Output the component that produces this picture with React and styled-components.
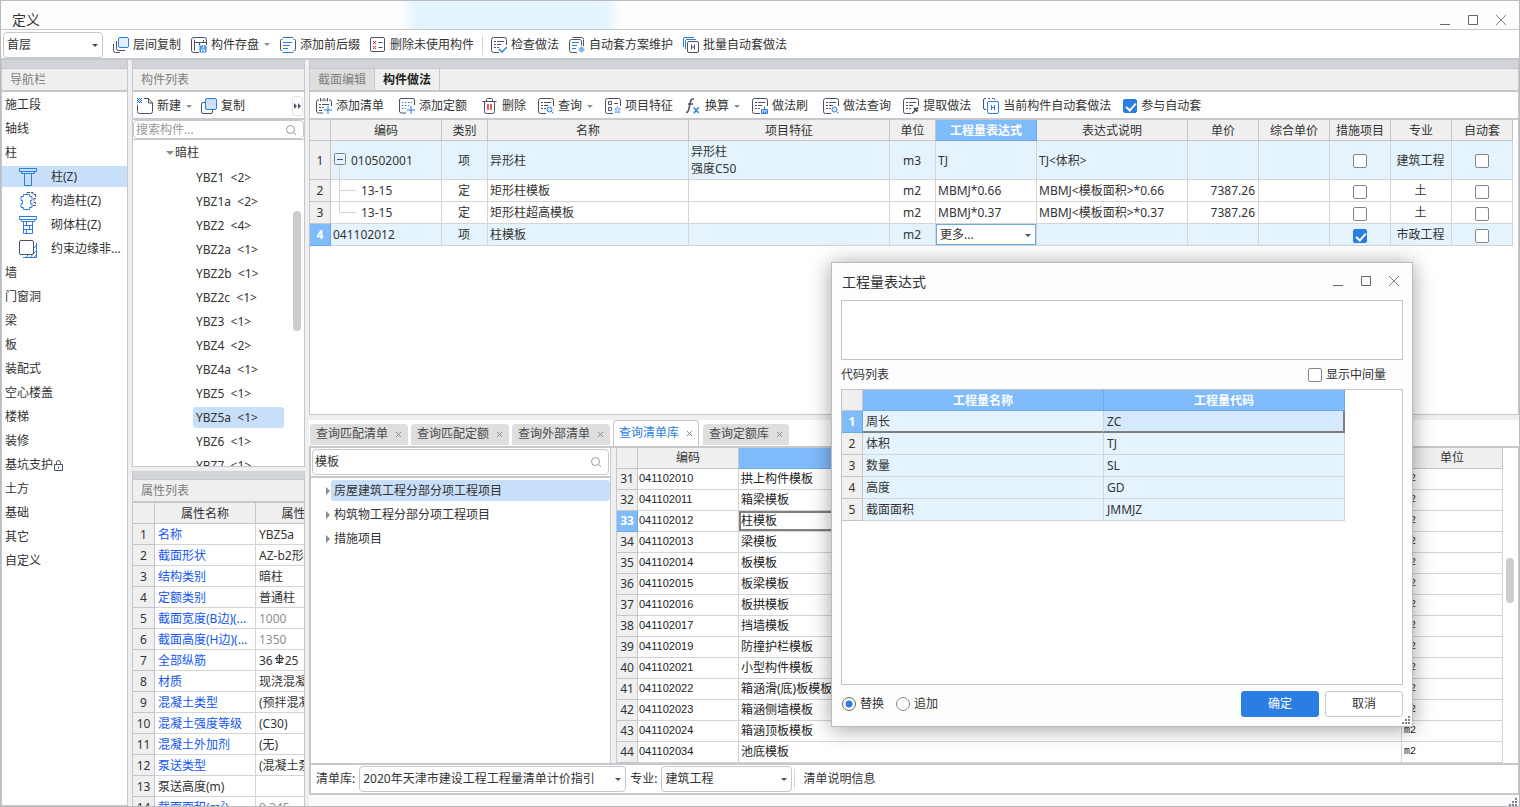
import React from "react";
import styled, { createGlobalStyle, css } from "styled-components";

const GlobalStyle = createGlobalStyle`
  * {
    box-sizing: border-box;
  }
  html,
  body,
  #root {
    height: 100%;
    margin: 0;
  }
  body {
    font: 12px/16px "Noto Sans", "Noto Sans CJK SC", sans-serif;
    color: #333;
    background: #fff;
    overflow: hidden;
  }
  button,
  input,
  select,
  textarea {
    font: inherit;
    color: inherit;
  }
`;

const line = "#c5c8cd";
const cellLine = "#d3d4d6";
const blue = "#2b7de1";
const ink = "#4b5166";

/* ---------- window frame ---------- */

const Window = styled.div`
  position: relative;
  display: flex;
  flex-direction: column;
  height: 100%;
  border: 1px solid #b9bbbf;
  background: #efefef;
`;

const TitleBar = styled.header`
  flex: none;
  display: flex;
  align-items: flex-end;
  justify-content: space-between;
  height: 29px;
  padding: 0 10px 0 11px;
  border-bottom: 1px solid ${line};
  background: linear-gradient(
      90deg,
      transparent 400px,
      #e3f3ff 416px,
      #e3f3ff 604px,
      transparent 620px
    ),
    #fdfdfe;
  h1 {
    margin: 0;
    font-size: 14px;
    line-height: 18px;
    font-weight: 400;
  }
`;

const WindowButtons = styled.div`
  display: flex;
  gap: 12px;
  button {
    display: flex;
    padding: 0;
    border: 0;
    background: none;
    margin-bottom: 1px;
  }
`;

const Bar = styled.div`
  flex: none;
  display: flex;
  align-items: center;
  gap: ${(p) => p.$gap || 10}px;
  height: ${(p) => p.$height || 28}px;
  padding: ${(p) => p.$pad || "2px 6px 0"};
  border-bottom: 2px solid ${line};
  background: #fff;
  white-space: nowrap;
`;

const Group = styled.div`
  display: flex;
  align-items: center;
  gap: 15px;
`;

const ToolButton = styled.button`
  display: flex;
  align-items: center;
  gap: 4px;
  padding: 0;
  border: 0;
  background: none;
  line-height: 20px;
  svg {
    flex: none;
  }
`;

const Caret = styled.span`
  margin-left: 1px;
  border: 3px solid transparent;
  border-top-color: #8b8f97;
  border-bottom: 0;
`;

const Divider = styled.span`
  width: 1px;
  height: 20px;
  margin: ${(p) => p.$margin};
  background: #d8d8d8;
`;

const SelectBox = styled.div`
  position: relative;
  width: ${(p) => p.$width};
  height: ${(p) => (p.$plain ? "21px" : "26px")};
  select {
    appearance: none;
    width: 100%;
    height: 100%;
    padding: 0 16px 0 3px;
    border: 1px solid ${(p) => (p.$plain ? "#6aa9ea" : line)};
    border-radius: ${(p) => (p.$plain ? 0 : 4)}px;
    background: #fff;
  }
  &::after {
    content: "";
    position: absolute;
    right: 5px;
    top: calc(50% - 1px);
    border: 3px solid transparent;
    border-top-color: ${ink};
    border-bottom: 0;
    pointer-events: none;
  }
`;

/* ---------- docked panels ---------- */

const Workspace = styled.main`
  flex: 1;
  min-height: 0;
  display: grid;
  grid-template-columns: 127px 173px minmax(0, 1fr);
  gap: 4px;
`;

const Column = styled.div`
  display: flex;
  flex-direction: column;
  gap: ${(p) => p.$gap || 4}px;
  min-width: 0;
  min-height: 0;
`;

const Panel = styled.section`
  flex: ${(p) => p.$grow || 1} 1 0;
  display: flex;
  flex-direction: column;
  min-height: 0;
  overflow: hidden;
  border: solid ${line};
  border-width: 0 1px ${(p) => (p.$open ? 0 : 1)}px;
  background: #fff;
`;

const Grip = styled.div`
  flex: none;
  height: 9px;
  border-bottom: 1px solid ${line};
  background: #d3d4da;
`;

const PanelTitle = styled.h2`
  flex: none;
  height: 23px;
  margin: 0;
  padding: 0 8px;
  border-bottom: 2px solid ${line};
  background: #efefef;
  color: #808080;
  font-size: 12px;
  line-height: 22px;
  font-weight: 400;
`;

const NavList = styled.nav`
  display: flex;
  flex-direction: column;
  padding-top: 1px;
`;

const NavItem = styled.a`
  display: flex;
  align-items: center;
  height: ${(p) => (p.$on ? 21 : 24)}px;
  margin: ${(p) => (p.$on ? "1px 0 2px" : 0)};
  padding-left: ${(p) => (p.$sub ? 16 : 3)}px;
  gap: ${(p) => (p.$sub ? 13 : 0)}px;
  background: ${(p) => (p.$on ? "#c8dffa" : "none")};
  color: inherit;
  text-decoration: none;
  white-space: nowrap;
`;

const SearchField = styled.label`
  flex: none;
  display: flex;
  align-items: center;
  height: ${(p) => p.$height}px;
  margin: ${(p) => p.$margin || 0};
  padding: 0 6px 0 1px;
  border: 1px solid ${line};
  border-radius: 4px;
  background: #fff;
  input {
    flex: 1;
    min-width: 0;
    padding: 0 1px;
    border: 0;
    outline: 0;
    background: none;
    line-height: 16px;
  }
  input::placeholder {
    color: #999;
  }
`;

const TreeArea = styled.div`
  position: relative;
  flex: 1;
  min-height: 0;
  overflow: hidden;
  padding-top: 1px;
  border-top: ${(p) => p.$line || 1}px solid ${line};
`;

const TreeRow = styled.div`
  display: flex;
  align-items: center;
  height: 24px;
  padding-left: ${(p) => p.$indent}px;
  gap: 1px;
  white-space: pre;
`;

const TreeLabel = styled.span`
  flex: ${(p) => (p.$fill ? 1 : "none")};
  min-width: ${(p) => p.$min || 0}px;
  padding: 0 3px;
  line-height: 21px;
  border-radius: 3px;
  background: ${(p) => (p.$on ? "#c8dffa" : "none")};
`;

const Twisty = styled.span`
  border: 4px solid transparent;
  ${(p) =>
    p.$open
      ? css`
          border-top-color: #8b8b8b;
          border-bottom: 0;
        `
      : css`
          border-left-color: #8b8b8b;
          border-right: 0;
        `}
`;

const Thumb = styled.span`
  position: absolute;
  right: ${(p) => p.$right}px;
  top: ${(p) => p.$top}px;
  width: 8px;
  height: ${(p) => p.$size}px;
  border-radius: 4px;
  background: #cdcdcd;
`;

/* ---------- tabs ---------- */

const PlainTabs = styled.div`
  flex: none;
  display: flex;
  height: 23px;
  border-bottom: 2px solid ${line};
  background: #efefef;
`;

const PlainTab = styled.button`
  padding: 0 8px;
  border: 0;
  border-right: 1px solid ${line};
  background: ${(p) => (p.$on ? "#efefef" : "#dedede")};
  color: ${(p) => (p.$on ? "#222" : "#808080")};
  font-weight: ${(p) => (p.$on ? 700 : 400)};
  line-height: 22px;
`;

const DocTabs = styled.div`
  flex: none;
  display: flex;
  align-items: flex-end;
  gap: 3px;
  height: 28px;
  padding-left: 1px;
  border-bottom: 2px solid ${line};
`;

const DocTab = styled.button`
  display: flex;
  align-items: center;
  gap: 7px;
  height: 21px;
  margin-bottom: 1px;
  padding: 0 6px;
  border: 0;
  border-radius: 4px 4px 0 0;
  background: #dedede;
  color: #4a4a4a;
  ${(p) =>
    p.$on &&
    css`
      height: 26px;
      margin-bottom: 0;
      margin-right: 1px;
      padding: 0 5px;
      border: 1px solid ${line};
      border-bottom: 0;
      background: #fff;
      color: ${blue};
    `}
`;

/* ---------- tables ---------- */

const Table = styled.table`
  width: ${(p) => p.$width};
  table-layout: fixed;
  border-collapse: separate;
  border-spacing: 0;
`;

const Th = styled.th`
  height: 21px;
  padding: 1px 0 0;
  border: solid #c3c5c8;
  border-width: 0 1px 1px 0;
  background: #efefef;
  font-weight: 400;
  line-height: 18px;
  white-space: nowrap;
  overflow: hidden;
  ${(p) =>
    p.$on &&
    css`
      border-color: #6aa9ea;
      background: #80bbfb;
      color: #fff;
      font-weight: 700;
    `}
`;

const Td = styled.td`
  height: ${(p) => p.$height || 22}px;
  padding: ${(p) => (p.$flush ? 0 : "0 3px 0 2px")};
  border: solid ${cellLine};
  border-width: 0 1px 1px 0;
  background: ${(p) => (p.$tint ? "#e5f3ff" : "#fff")};
  text-align: ${(p) => p.$align || "left"};
  line-height: 17px;
  white-space: pre;
  overflow: hidden;
  text-overflow: ellipsis;
`;

const NumTh = styled(Th)`
  height: ${(p) => p.$height || 22}px;
`;

const CodeTd = styled(Td)`
  padding-left: 1px;
  padding-bottom: 2px;
  color: #222;
  font-family: "Liberation Sans", "Noto Sans CJK SC", sans-serif;
  font-size: 11px;
  line-height: 16px;
`;

const ItemTd = styled(Td)`
  line-height: 16px;
  color: #222;
  ${(p) => p.$on && "box-shadow: inset 0 0 0 2px #7f7f7f;"}
`;

const UnitTd = styled(Td)`
  font-family: "Liberation Mono", monospace;
  font-size: 10px;
  color: #222;
`;

const PropTd = styled(Td)`
  padding-left: 3px;
  color: ${(p) => p.$color || "#333"};
`;

const CodeCell = styled.div`
  display: flex;
  align-items: center;
  height: ${(p) => p.$height}px;
  gap: 5px;
  padding-left: 2px;
`;

const Check = styled.input.attrs({ type: "checkbox" })`
  appearance: none;
  display: inline-block;
  position: relative;
  flex: none;
  width: 14px;
  height: 14px;
  margin: 0;
  vertical-align: middle;
  border: 1px solid #858585;
  border-radius: 2px;
  background: #fff;
  &:checked {
    border-color: ${blue};
    background: ${blue};
  }
  &:checked::before {
    content: "";
    position: absolute;
    left: 4px;
    top: 1px;
    width: 4px;
    height: 8px;
    border: solid #fff;
    border-width: 0 2px 2px 0;
    transform: rotate(42deg);
  }
`;

const Radio = styled.input.attrs({ type: "radio" })`
  appearance: none;
  width: 14px;
  height: 14px;
  margin: 0;
  border: 1px solid #858585;
  border-radius: 50%;
  background: #fff;
  &:checked {
    border-color: #666;
    background: radial-gradient(${blue} 3px, #fff 4px);
  }
`;

const CheckLabel = styled.label`
  display: flex;
  align-items: center;
  gap: 4px;
  line-height: 18px;
`;

/* ---------- lower query area ---------- */

const QueryPanel = styled.section`
  flex: 376 1 0;
  display: flex;
  flex-direction: column;
  min-height: 0;
  background: #fff;
`;

const QueryBody = styled.div`
  flex: 1;
  min-height: 0;
  display: grid;
  grid-template-columns: 302px minmax(0, 1fr);
  gap: 5px;
  background: #efefef;
`;

const QuerySide = styled.div`
  display: flex;
  flex-direction: column;
  min-height: 0;
  padding-top: 1px;
  border: solid ${line};
  border-width: 0 1px 0 2px;
  background: #fff;
`;

const QueryList = styled.div`
  position: relative;
  overflow: hidden;
  padding-right: 15px;
  border: solid ${line};
  border-width: 0 1px;
  background: #fff;
`;

const QueryFooter = styled(Bar)`
  gap: 4px;
  height: 32px;
  border: 1px solid ${line};
  border-width: 2px 1px 2px 2px;
`;

const StatusStrip = styled.footer`
  flex: none;
  display: flex;
  justify-content: flex-end;
  align-items: flex-end;
  height: 11px;
  padding: 0 2px;
  margin-top: -5px;
  background: #fbfbfc;
`;

/* ---------- expression dialog ---------- */

const Dialog = styled.div`
  position: absolute;
  right: 106px;
  bottom: 79px;
  display: flex;
  flex-direction: column;
  width: 582px;
  height: 465px;
  padding: 0 9px 9px;
  border: 1px solid #b9bbbf;
  background: #fdfdfe;
  box-shadow: 0 2px 20px rgba(0, 0, 0, 0.38);
`;

const DialogTitle = styled.div`
  display: flex;
  align-items: center;
  justify-content: space-between;
  height: 37px;
  padding: 0 1px;
  h2 {
    margin: 0;
    font-size: 14px;
    line-height: 20px;
    font-weight: 400;
  }
`;

const Expression = styled.textarea`
  flex: none;
  height: 60px;
  border: 1px solid #c3c5c8;
  background: #fff;
  resize: none;
`;

const DialogRow = styled.div`
  flex: none;
  display: flex;
  align-items: center;
  justify-content: space-between;
  height: 29px;
  padding-right: 17px;
`;

const CodeList = styled.div`
  flex: 1;
  min-height: 0;
  margin-bottom: 6px;
  border: 1px solid #c3c5c8;
  background: #fff;
`;

const CodeRow = styled.tr`
  td {
    padding-left: 3px;
  }
  ${(p) =>
    p.$on &&
    css`
      td {
        border-bottom: 2px solid #7f7f7f;
      }
      td:last-child {
        border-right: 2px solid #7f7f7f;
        background: #d4e9fe;
      }
    `}
`;

const DialogFooter = styled.div`
  flex: none;
  display: flex;
  align-items: center;
  gap: 6px;
  height: 26px;
`;

const Choices = styled.div`
  flex: 1;
  display: flex;
  gap: 12px;
  padding-left: 1px;
`;

const PushButton = styled.button`
  width: 78px;
  height: 26px;
  border: 1px solid ${(p) => (p.$primary ? blue : line)};
  border-radius: 3px;
  background: ${(p) => (p.$primary ? blue : "#fff")};
  color: ${(p) => (p.$primary ? "#fff" : "#333")};
`;

const DialogGrip = styled.span`
  position: absolute;
  right: 2px;
  bottom: 2px;
  display: flex;
`;

const OverflowButton = styled.button`
  display: flex;
  align-items: center;
  justify-content: center;
  margin-left: auto;
  width: 11px;
  height: 20px;
  padding: 0;
  border: 1px solid #e3e3e3;
  border-radius: 3px;
  background: #fff;
`;

/* ---------- icons ---------- */

const Icon = ({ children, size = 16, ...rest }) => (
  <svg
    width={size}
    height={size}
    viewBox={`0 0 ${size} ${size}`}
    fill="none"
    stroke={ink}
    aria-hidden="true"
    {...rest}>
    {children}
  </svg>
);

const Sheet = () => (
  <path d="M15.500 8V2.500a2 2 0 0 0-2-2h-11a2 2 0 0 0-2 2v11a2 2 0 0 0 2 2H8" />
);

const sheetLines = "M3 4.500h2M6 4.500h7M3 7.500h2M6 7.500h4M3 10.500h2M6 10.500h2";

const icons = {
  floorCopy: (
    <Icon>
      <path d="M.5 7v6.500a2 2 0 0 0 2 2H7" />
      <path d="M3.500 4v7.500a2 2 0 0 0 2 2H12" />
      <rect x="5.500" y=".5" width="10" height="10" rx="1.500" fill="#e1f0ff" stroke={blue} />
    </Icon>
  ),
  save: (
    <Icon>
      <Sheet />
      <path d="M3.500 2.500v11M3.500 5.500h12M8.500 5.500v3M12.500 3v3" />
      <path d="M9 9h6v6H9z" fill="#6ba6ee" stroke={blue} />
      <path d="M10.500 15v-2h3v2M12.500 9v1.500" stroke="#fff" />
    </Icon>
  ),
  affix: (
    <Icon>
      <path d="M2.500 2.500h-1a1 1 0 0 0-1 1v9a1 1 0 0 0 1 1h1M13.500 2.500h1a1 1 0 0 1 1 1v9a1 1 0 0 1-1 1h-1" />
      <path d="M3 5.500h9M3 8.500h7M3 11.500h5M2.500 .5h11M2.500 15.500h11" stroke={blue} />
    </Icon>
  ),
  removeUnused: (
    <Icon>
      <rect x=".5" y=".5" width="14" height="14" rx="1.500" />
      <path d="M3 4l3 3M6 4l-3 3M3 9l3 3M6 9l-3 3" stroke="#d8232a" />
      <path d="M8.500 5.500h4M8.500 10.500h4" />
    </Icon>
  ),
  verify: (
    <Icon>
      <Sheet />
      <path d={sheetLines} />
      <path d="M8 12l3 3 5-5" stroke={blue} strokeWidth="1.500" />
    </Icon>
  ),
  scheme: (
    <Icon>
      <path d="M3.500 .5h9a2 2 0 0 1 2 2M8 15.500H2.500a2 2 0 0 1-2-2v-9a2 2 0 0 1 2-2h8a2 2 0 0 1 2 2v4M14.500 3v6" />
      <path d="M3 5.500h7M3 8.500h5M3 11.500h4" stroke={blue} />
      <circle cx="12.500" cy="12.500" r="2.500" fill="#a9cdf8" stroke="#6ba6ee" strokeDasharray="1.500 1" />
      <circle cx="12.500" cy="12.500" r="1" fill="#fff" stroke={blue} />
    </Icon>
  ),
  batch: (
    <Icon>
      <path d="M.5 10V2a1.500 1.500 0 0 1 1.500-1.500h9M2.500 12V4a1.500 1.500 0 0 1 1.500-1.500h9" stroke={blue} />
      <rect x="4.500" y="4.500" width="11" height="11" rx="1.500" />
      <path d="M8.500 7.500v5M11.500 7.500v5M8.500 10h3" />
    </Icon>
  ),
  create: (
    <Icon>
      <path d="M.5 7v6.500a2 2 0 0 0 2 2h11a2 2 0 0 0 2-2V5l-4-4.500H7M11.500 .5V5h4" />
      <path d="M0 .5h1M2 .5h1M4 .5h1M1 1.500h1M3 1.500h1M0 2.500h1M2 2.500h1M4 2.500h1M1 3.500h1M3 3.500h1M0 4.500h1M2 4.500h1M4 4.500h1" stroke="#1467d6" />
    </Icon>
  ),
  copy: (
    <Icon>
      <rect x=".5" y="4.500" width="11" height="11" rx="1.500" />
      <rect x="4.500" y=".5" width="11" height="11" rx="1.500" fill="#cfe0fb" stroke={blue} />
    </Icon>
  ),
  addList: (
    <Icon>
      <path d="M15.500 8V3.500a1.500 1.500 0 0 0-1.500-1.500h-1M3 2H2A1.500 1.500 0 0 0 .5 3.500V13a2 2 0 0 0 2 2H7M4.500 0v3.500M8 0v3.500M11.500 0v3.500M5.500 2h1.500M9 2h1.500" />
      <path d="M3 6.500h2M6 6.500h7M3 9.500h2M6 9.500h2M3 12.500h3" />
      <path d="M12 8v8M8 12h8" stroke={blue} />
    </Icon>
  ),
  addQuota: (
    <Icon>
      <path d="M15.500 7V2a1.500 1.500 0 0 0-1.500-1.500H2A1.500 1.500 0 0 0 .5 2v11a2 2 0 0 0 2 2H7" />
      <path d="M3 4.500h10M3 7.500h7M3 10.500h4" stroke={blue} strokeDasharray="1.500 1.500" />
      <path d="M12 8v8M8 12h8" stroke={blue} />
    </Icon>
  ),
  trash: (
    <Icon>
      <path d="M4.500 3V1.500a1 1 0 0 1 1-1h4a1 1 0 0 1 1 1V3M.5 3.500h14M2.500 3.500v10a2 2 0 0 0 2 2h6a2 2 0 0 0 2-2v-10" />
      <path d="M6 6v6M9 6v6" stroke="#e02b2b" strokeWidth="1.500" />
    </Icon>
  ),
  query: (
    <Icon>
      <Sheet />
      <path d={sheetLines} />
      <circle cx="11.500" cy="11.500" r="2.500" fill="#e1f0ff" stroke={blue} />
      <path d="M13.500 13.500l2 2" stroke={blue} />
    </Icon>
  ),
  feature: (
    <Icon>
      <Sheet />
      <path d="M3.500 3.500h3v3h-3zM3.500 9.500h3v3h-3zM9 5.500h4" />
      <path d="M12.500 8.500l1 2 2 .5-1.500 1.500.5 2.500-2-1-2 1 .5-2.500L9.500 11l2-.5z" fill="#c9e0fc" stroke="#6ba6ee" />
    </Icon>
  ),
  formula: (
    <Icon>
      <path d="M1 14.500c2 0 2.500-1.500 3-4l1.500-7c.4-1.800 1.300-3 3.500-2.500M3 6h5" strokeWidth="1.500" />
      <path d="M8.500 9.500c2 0 2.500 5.500 5.500 5M14 9.500c-2 0-3.500 5.500-5.500 5.500" stroke={blue} strokeWidth="1.500" />
    </Icon>
  ),
  brush: (
    <Icon>
      <Sheet />
      <path d={sheetLines} />
      <path d="M9.500 15.500v-4h6v4zM12.500 8.500v3M11.500 13.500v2M13.500 13.500v2" stroke={blue} fill="#a9cdf8" />
    </Icon>
  ),
  extract: (
    <Icon>
      <Sheet />
      <path d={sheetLines} />
      <path d="M9 15.500l4-4" strokeWidth="1.500" />
      <path d="M11 10l3.500 3.500M13 11.500l2-2" strokeWidth="2" />
    </Icon>
  ),
  autoApply: (
    <Icon>
      <path d="M3 11.500H2A1.500 1.500 0 0 1 .5 10V2A1.500 1.500 0 0 1 2 .5h1M5 .5h2M9 .5h1.500A1.500 1.500 0 0 1 12 2" />
      <rect x="4.500" y="3.500" width="11" height="12" rx="1.500" stroke={blue} />
      <path d="M8.500 7v5M11.500 7v5M8.500 9.500h3" stroke={blue} />
    </Icon>
  ),
};

const ColumnIcon = () => (
  <Icon size={20} stroke={blue}>
    <path d="M1.500 1.500h17v3h-17zM3.500 4.500v2h13v-2M6.500 6.500v12h7v-12" />
  </Icon>
);

const TieColumnIcon = () => (
  <Icon size={20}>
    <path d="M9 2.500V1.500h6v2h2.500v4h-1.500v4h1.500v3H15" strokeDasharray="4 1" />
    <path
      d="M5.500 3.500h6v2h2.500v4h-1.500v3H14v4h-2.500v2h-6v-2H3v-4h1.500v-3H3v-4h2.500z"
      stroke={blue}
      fill="#fff"
    />
  </Icon>
);

const MasonryIcon = () => (
  <Icon size={20} stroke={blue}>
    <path d="M1.500 1.500h17v3h-17zM5.500 6.500h9v12h-9zM5.500 10.500h9M5.500 14.500h9M8.500 6.500v4M11.500 10.500v4M8.500 14.500v4M3.500 4.500v2h13v-2" />
  </Icon>
);

const EdgeIcon = () => (
  <Icon size={20}>
    <path d="M5 18.500h13.500V4M16 18.500l2.500-3M12 18.500l6.500-7M8 18.500l2-2.500M16 9l2.500-3" stroke={blue} />
    <rect x="1.500" y="1.500" width="14" height="14" rx="1.500" fill="#fff" />
  </Icon>
);

const LockIcon = () => (
  <Icon size={11}>
    <path d="M1.500 4.500h8v6h-8zM3.500 4.500V2.500a2 2 0 0 1 4 0v2M5.500 6.500v2" />
  </Icon>
);

const SearchIcon = () => (
  <Icon size={12} stroke="#999">
    <circle cx="5.500" cy="5.500" r="4" />
    <path d="M8.500 8.500l2.500 2.500" />
  </Icon>
);

const CloseIcon = () => (
  <Icon size={7} stroke="#8b8b8b">
    <path d="M1 1l5 5M6 1l-5 5" />
  </Icon>
);

const GripIcon = () => (
  <svg width="8" height="8" viewBox="0 0 8 8" fill="#80848e" aria-hidden="true">
    <path d="M6 0h2v2H6zM3 3h2v2H3zM6 3h2v2H6zM0 6h2v2H0zM3 6h2v2H3zM6 6h2v2H6z" />
  </svg>
);

/* ---------- data ---------- */

const nav = [
  { name: "施工段" },
  { name: "轴线" },
  { name: "柱" },
  { name: "柱(Z)", icon: <ColumnIcon />, on: true },
  { name: "构造柱(Z)", icon: <TieColumnIcon /> },
  { name: "砌体柱(Z)", icon: <MasonryIcon /> },
  { name: "约束边缘非...", icon: <EdgeIcon /> },
  { name: "墙" },
  { name: "门窗洞" },
  { name: "梁" },
  { name: "板" },
  { name: "装配式" },
  { name: "空心楼盖" },
  { name: "楼梯" },
  { name: "装修" },
  { name: "基坑支护", lock: true },
  { name: "土方" },
  { name: "基础" },
  { name: "其它" },
  { name: "自定义" },
];

const components = [
  "YBZ1  <2>",
  "YBZ1a  <2>",
  "YBZ2  <4>",
  "YBZ2a  <1>",
  "YBZ2b  <1>",
  "YBZ2c  <1>",
  "YBZ3  <1>",
  "YBZ4  <2>",
  "YBZ4a  <1>",
  "YBZ5  <1>",
  "YBZ5a  <1>",
  "YBZ6  <1>",
  "YBZ7  <1>",
];

const link = "#1456f0";

const props = [
  ["名称", "YBZ5a"],
  ["截面形状", "AZ-b2形"],
  ["结构类别", "暗柱"],
  ["定额类别", "普通柱"],
  ["截面宽度(B边)(...", "1000", "#909090"],
  ["截面高度(H边)(...", "1350", "#909090"],
  ["全部纵筋", "rebar"],
  ["材质", "现浇混凝土"],
  ["混凝土类型", "(预拌混凝土)"],
  ["混凝土强度等级", "(C30)"],
  ["混凝土外加剂", "(无)"],
  ["泵送类型", "(混凝土泵)"],
  ["泵送高度(m)", ""],
  ["截面面积(m²)", "0.345", "#909090"],
];

const methodHeads = [
  "编码",
  "类别",
  "名称",
  "项目特征",
  "单位",
  "工程量表达式",
  "表达式说明",
  "单价",
  "综合单价",
  "措施项目",
  "专业",
  "自动套",
];

const methodWidths = [21, 111, 46, 201, 201, 46, 101, 151, 71, 71, 61, 61, 61];

const methods = [
  { code: "010502001", type: "项", name: "异形柱", feature: "异形柱\n强度C50", unit: "m3", expr: "TJ", note: "TJ<体积>", major: "建筑工程", kind: "root" },
  { code: "13-15", type: "定", name: "矩形柱模板", unit: "m2", expr: "MBMJ*0.66", note: "MBMJ<模板面积>*0.66", price: "7387.26", major: "土", kind: "child" },
  { code: "13-15", type: "定", name: "矩形柱超高模板", unit: "m2", expr: "MBMJ*0.37", note: "MBMJ<模板面积>*0.37", price: "7387.26", major: "土", kind: "last" },
  { code: "041102012", type: "项", name: "柱模板", unit: "m2", major: "市政工程", measure: true, kind: "current" },
];

const queryTabs = ["查询匹配清单", "查询匹配定额", "查询外部清单", "查询清单库", "查询定额库"];

const chapters = ["房屋建筑工程分部分项工程项目", "构筑物工程分部分项工程项目", "措施项目"];

const items = [
  ["041102010", "拱上构件模板"],
  ["041102011", "箱梁模板"],
  ["041102012", "柱模板"],
  ["041102013", "梁模板"],
  ["041102014", "板模板"],
  ["041102015", "板梁模板"],
  ["041102016", "板拱模板"],
  ["041102017", "挡墙模板"],
  ["041102019", "防撞护栏模板"],
  ["041102021", "小型构件模板"],
  ["041102022", "箱涵滑(底)板模板"],
  ["041102023", "箱涵侧墙模板"],
  ["041102024", "箱涵顶板模板"],
  ["041102034", "池底模板"],
  ["", ""],
];

const codes = [
  ["周长", "ZC"],
  ["体积", "TJ"],
  ["数量", "SL"],
  ["高度", "GD"],
  ["截面面积", "JMMJZ"],
];

/* ---------- parts ---------- */

const Tool = ({ icon, children, menu }) => (
  <ToolButton type="button">
    {icons[icon]}
    {children}
    {menu && <Caret />}
  </ToolButton>
);

const FrameButtons = () => (
  <WindowButtons>
    <button type="button" aria-label="最小化">
      <Icon stroke="#666">
        <path d="M3 12.500h10" />
      </Icon>
    </button>
    <button type="button" aria-label="最大化">
      <Icon stroke="#666">
        <path d="M3.500 3.500h9v9h-9z" />
      </Icon>
    </button>
    <button type="button" aria-label="关闭">
      <Icon stroke="#808080">
        <path d="M3 3l10 10M13 3L3 13" />
      </Icon>
    </button>
  </WindowButtons>
);

const Cols = ({ widths }) => (
  <colgroup>
    {widths.map((w, i) => (
      <col key={i} style={{ width: w }} />
    ))}
  </colgroup>
);

const Branch = ({ kind }) => {
  if (kind === "root") {
    return (
      <svg width="13" height="38" fill="none" aria-hidden="true">
        <rect x="1.500" y="12.500" width="11" height="11" rx="1" stroke="#808080" />
        <path d="M4 18.500h6" stroke={ink} />
        <path d="M6.500 25v13" stroke={cellLine} />
      </svg>
    );
  }
  return (
    <svg width="23" height="21" fill="none" stroke={cellLine} aria-hidden="true">
      <path d={kind === "last" ? "M6.500 0v10.500h16" : "M6.500 0v21M6.500 10.500h16"} />
    </svg>
  );
};

const Rebar = () => (
  <>
    36
    <svg width="12" height="11" viewBox="0 0 12 11" fill="none" stroke="#333" aria-label="三级钢">
      <circle cx="6.500" cy="4.500" r="3" />
      <path d="M6.500 0v10M2 4.500h9M3 8.500h7" />
    </svg>
    25
  </>
);

const Navigator = () => (
  <Panel>
    <Grip />
    <PanelTitle>导航栏</PanelTitle>
    <NavList>
      {nav.map((n) => (
        <NavItem href="#" key={n.name} $sub={!!n.icon} $on={n.on}>
          {n.icon}
          {n.name}
          {n.lock && <LockIcon />}
        </NavItem>
      ))}
    </NavList>
  </Panel>
);

const ComponentList = () => (
  <Panel $grow={407}>
    <Grip />
    <PanelTitle>构件列表</PanelTitle>
    <Bar $gap={9} $pad="2px 1px 0 4px">
      <Tool icon="create" menu>
        新建
      </Tool>
      <Tool icon="copy">复制</Tool>
      <OverflowButton type="button" aria-label="更多">
        <svg width="8" height="6" fill={ink} aria-hidden="true">
          <path d="M0 0l3 3-3 3zM4 0l3 3-3 3z" />
        </svg>
      </OverflowButton>
    </Bar>
    <SearchField $height={19}>
      <input placeholder="搜索构件..." aria-label="搜索构件" />
      <SearchIcon />
    </SearchField>
    <TreeArea>
      <TreeRow $indent={33}>
        <Twisty $open />
        暗柱
      </TreeRow>
      {components.map((c) => (
        <TreeRow key={c} $indent={60}>
          <TreeLabel $on={c.startsWith("YBZ5a")} $min={91}>
            {c}
          </TreeLabel>
        </TreeRow>
      ))}
      <Thumb $right={3} $top={71} $size={120} />
    </TreeArea>
  </Panel>
);

const Properties = () => (
  <Panel $grow={335} $open>
    <Grip />
    <PanelTitle>属性列表</PanelTitle>
    <Table $width="211px">
      <Cols widths={[22, 101, 88]} />
      <thead>
        <tr>
          <Th />
          <Th>属性名称</Th>
          <Th>属性值</Th>
        </tr>
      </thead>
      <tbody>
        {props.map(([name, value, color], i) => (
          <tr key={name}>
            <NumTh $height={21}>{i + 1}</NumTh>
            <PropTd $height={21} $color={i === 12 ? "#333" : link}>
              {name}
            </PropTd>
            <PropTd $height={21} $color={color}>
              {value === "rebar" ? <Rebar /> : value}
            </PropTd>
          </tr>
        ))}
      </tbody>
    </Table>
  </Panel>
);

const MethodTable = () => (
  <Table $width="1203px">
    <Cols widths={methodWidths} />
    <thead>
      <tr>
        <Th />
        {methodHeads.map((h) => (
          <Th key={h} $on={h === "工程量表达式"}>
            {h}
          </Th>
        ))}
      </tr>
    </thead>
    <tbody>
      {methods.map((m, i) => {
        const root = m.kind === "root";
        const current = m.kind === "current";
        const cell = { $tint: root || current, $height: root ? 39 : 22 };
        return (
          <tr key={i}>
            <NumTh $on={current}>{i + 1}</NumTh>
            {current ? (
              <Td {...cell}>{m.code}</Td>
            ) : (
              <Td {...cell} $flush>
                <CodeCell $height={root ? 38 : 21}>
                  <Branch kind={m.kind} />
                  {m.code}
                </CodeCell>
              </Td>
            )}
            <Td {...cell} $align="center">{m.type}</Td>
            <Td {...cell}>{m.name}</Td>
            <Td {...cell}>{m.feature}</Td>
            <Td {...cell} $align="center">{m.unit}</Td>
            {current ? (
              <Td {...cell} $flush>
                <SelectBox $width="100%" $plain>
                  <select aria-label="工程量表达式">
                    <option>更多...</option>
                  </select>
                </SelectBox>
              </Td>
            ) : (
              <Td {...cell}>{m.expr}</Td>
            )}
            <Td {...cell}>{m.note}</Td>
            <Td {...cell} $align="right">{m.price}</Td>
            <Td {...cell} />
            <Td {...cell} $align="center">
              <Check aria-label="措施项目" defaultChecked={m.measure} />
            </Td>
            <Td {...cell} $align="center">{m.major}</Td>
            <Td {...cell} $align="center">
              <Check aria-label="自动套" />
            </Td>
          </tr>
        );
      })}
    </tbody>
  </Table>
);

const Methods = () => (
  <Panel $grow={354}>
    <Grip />
    <PlainTabs>
      <PlainTab type="button">截面编辑</PlainTab>
      <PlainTab type="button" $on>
        构件做法
      </PlainTab>
    </PlainTabs>
    <Bar $gap={12}>
      <Group>
        <Tool icon="addList">添加清单</Tool>
        <Tool icon="addQuota">添加定额</Tool>
        <Tool icon="trash">删除</Tool>
      </Group>
      <Tool icon="query" menu>查询</Tool>
      <Tool icon="feature">项目特征</Tool>
      <Tool icon="formula" menu>换算</Tool>
      <Group>
        <Tool icon="brush">做法刷</Tool>
        <Tool icon="query">做法查询</Tool>
      </Group>
      <Tool icon="extract">提取做法</Tool>
      <Tool icon="autoApply">当前构件自动套做法</Tool>
      <CheckLabel>
        <Check defaultChecked />
        参与自动套
      </CheckLabel>
    </Bar>
    <MethodTable />
  </Panel>
);

const Query = () => (
  <QueryPanel>
    <DocTabs>
      {queryTabs.map((t) => (
        <DocTab type="button" key={t} $on={t === "查询清单库"}>
          {t}
          <CloseIcon />
        </DocTab>
      ))}
    </DocTabs>
    <QueryBody>
      <QuerySide>
        <SearchField $height={26} $margin="0 1px 1px">
          <input defaultValue="模板" aria-label="查询" />
          <SearchIcon />
        </SearchField>
        <TreeArea $line={2}>
          {chapters.map((c, i) => (
            <TreeRow key={c} $indent={15}>
              <Twisty />
              <TreeLabel $on={i === 0} $fill>
                {c}
              </TreeLabel>
            </TreeRow>
          ))}
        </TreeArea>
      </QuerySide>
      <QueryList>
        <Table $width="100%">
          <Cols widths={[21, 101, "auto", 101]} />
          <thead>
            <tr>
              <Th />
              <Th>编码</Th>
              <Th $on />
              <Th>单位</Th>
            </tr>
          </thead>
          <tbody>
            {items.map(([code, name], i) => (
              <tr key={code}>
                <NumTh $height={21} $on={i === 2}>
                  {code && i + 31}
                </NumTh>
                <CodeTd $height={21}>{code}</CodeTd>
                <ItemTd $height={21} $on={i === 2}>
                  {name}
                </ItemTd>
                <UnitTd $height={21}>{code && "m2"}</UnitTd>
              </tr>
            ))}
          </tbody>
        </Table>
        <Thumb $right={4} $top={110} $size={45} />
      </QueryList>
    </QueryBody>
    <QueryFooter $pad="0 5px">
      <label htmlFor="library">清单库:</label>
      <SelectBox $width="267px">
        <select id="library">
          <option>2020年天津市建设工程工程量清单计价指引</option>
        </select>
      </SelectBox>
      <label htmlFor="major">专业:</label>
      <SelectBox $width="131px">
        <select id="major">
          <option>建筑工程</option>
        </select>
      </SelectBox>
      <Divider $margin="0 4px 0 -2px" />
      <ToolButton type="button">清单说明信息</ToolButton>
    </QueryFooter>
  </QueryPanel>
);

const ExpressionDialog = () => (
  <Dialog role="dialog" aria-labelledby="dialog-title">
    <DialogTitle>
      <h2 id="dialog-title">工程量表达式</h2>
      <FrameButtons />
    </DialogTitle>
    <Expression aria-label="表达式" />
    <DialogRow>
      <span>代码列表</span>
      <CheckLabel>
        <Check />
        显示中间量
      </CheckLabel>
    </DialogRow>
    <CodeList>
      <Table $width="503px">
        <Cols widths={[21, 241, 241]} />
        <thead>
          <tr>
            <Th />
            <Th $on>工程量名称</Th>
            <Th $on>工程量代码</Th>
          </tr>
        </thead>
        <tbody>
          {codes.map(([name, code], i) => (
            <CodeRow key={code} $on={i === 0}>
              <NumTh $on={i === 0}>{i + 1}</NumTh>
              <Td $tint>{name}</Td>
              <Td $tint>{code}</Td>
            </CodeRow>
          ))}
        </tbody>
      </Table>
    </CodeList>
    <DialogFooter>
      <Choices>
        <CheckLabel>
          <Radio name="mode" defaultChecked />
          替换
        </CheckLabel>
        <CheckLabel>
          <Radio name="mode" />
          追加
        </CheckLabel>
      </Choices>
      <PushButton type="button" $primary>
        确定
      </PushButton>
      <PushButton type="button">取消</PushButton>
    </DialogFooter>
    <DialogGrip>
      <GripIcon />
    </DialogGrip>
  </Dialog>
);

export default function App() {
  return (
    <>
      <GlobalStyle />
      <Window>
        <TitleBar>
          <h1>定义</h1>
          <FrameButtons />
        </TitleBar>
        <Bar $height={30} $pad="1px 2px 0">
          <SelectBox $width="100px">
            <select aria-label="楼层">
              <option>首层</option>
            </select>
          </SelectBox>
          <Tool icon="floorCopy">层间复制</Tool>
          <Tool icon="save" menu>
            构件存盘
          </Tool>
          <Tool icon="affix">添加前后缀</Tool>
          <Tool icon="removeUnused">删除未使用构件</Tool>
          <Divider $margin="0 -2px" />
          <Tool icon="verify">检查做法</Tool>
          <Tool icon="scheme">自动套方案维护</Tool>
          <Tool icon="batch">批量自动套做法</Tool>
        </Bar>
        <Workspace>
          <Navigator />
          <Column>
            <ComponentList />
            <Properties />
          </Column>
          <Column $gap={5}>
            <Methods />
            <Query />
            <StatusStrip>
              <GripIcon />
            </StatusStrip>
          </Column>
        </Workspace>
        <ExpressionDialog />
      </Window>
    </>
  );
}
